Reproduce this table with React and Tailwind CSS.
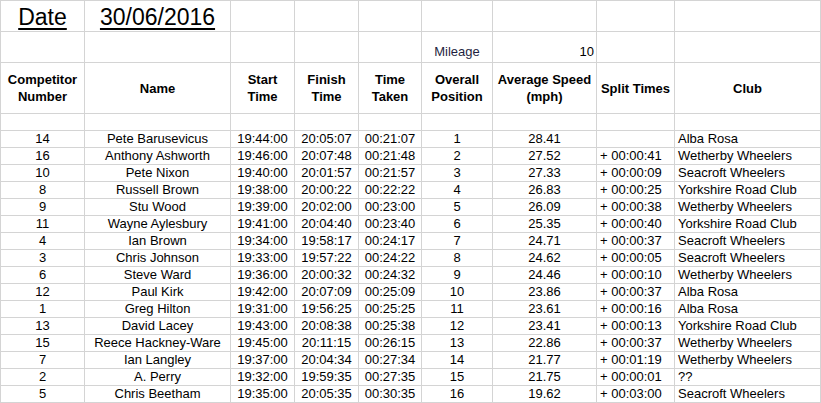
import { Fragment } from "react";

const results = [
  ["14", "Pete Barusevicus", "19:44:00", "20:05:07", "00:21:07", "1", "28.41", "", "Alba Rosa"],
  ["16", "Anthony Ashworth", "19:46:00", "20:07:48", "00:21:48", "2", "27.52", "+ 00:00:41", "Wetherby Wheelers"],
  ["10", "Pete Nixon", "19:40:00", "20:01:57", "00:21:57", "3", "27.33", "+ 00:00:09", "Seacroft Wheelers"],
  ["8", "Russell Brown", "19:38:00", "20:00:22", "00:22:22", "4", "26.83", "+ 00:00:25", "Yorkshire Road Club"],
  ["9", "Stu Wood", "19:39:00", "20:02:00", "00:23:00", "5", "26.09", "+ 00:00:38", "Wetherby Wheelers"],
  ["11", "Wayne Aylesbury", "19:41:00", "20:04:40", "00:23:40", "6", "25.35", "+ 00:00:40", "Yorkshire Road Club"],
  ["4", "Ian Brown", "19:34:00", "19:58:17", "00:24:17", "7", "24.71", "+ 00:00:37", "Seacroft Wheelers"],
  ["3", "Chris Johnson", "19:33:00", "19:57:22", "00:24:22", "8", "24.62", "+ 00:00:05", "Seacroft Wheelers"],
  ["6", "Steve Ward", "19:36:00", "20:00:32", "00:24:32", "9", "24.46", "+ 00:00:10", "Wetherby Wheelers"],
  ["12", "Paul Kirk", "19:42:00", "20:07:09", "00:25:09", "10", "23.86", "+ 00:00:37", "Alba Rosa"],
  ["1", "Greg Hilton", "19:31:00", "19:56:25", "00:25:25", "11", "23.61", "+ 00:00:16", "Alba Rosa"],
  ["13", "David Lacey", "19:43:00", "20:08:38", "00:25:38", "12", "23.41", "+ 00:00:13", "Yorkshire Road Club"],
  ["15", "Reece Hackney-Ware", "19:45:00", "20:11:15", "00:26:15", "13", "22.86", "+ 00:00:37", "Wetherby Wheelers"],
  ["7", "Ian Langley", "19:37:00", "20:04:34", "00:27:34", "14", "21.77", "+ 00:01:19", "Wetherby Wheelers"],
  ["2", "A. Perry", "19:32:00", "19:59:35", "00:27:35", "15", "21.75", "+ 00:00:01", "??"],
  ["5", "Chris Beetham", "19:35:00", "20:05:35", "00:30:35", "16", "19.62", "+ 00:03:00", "Seacroft Wheelers"],
];

const headers = [
  ["Competitor", "Number"],
  ["Name"],
  ["Start", "Time"],
  ["Finish", "Time"],
  ["Time", "Taken"],
  ["Overall", "Position"],
  ["Average Speed", "(mph)"],
  ["Split Times"],
  ["Club"],
];

const cell = "border-r border-b border-[#d4d4d4] overflow-hidden whitespace-nowrap";

const App = () => {
  return (
    <div className="w-[821px] h-[403px] bg-white text-black font-['Liberation_Sans',Arial,sans-serif] text-[13px]">
      <div className="grid grid-cols-[84px_146px_64px_64px_63px_71px_104px_78px_146px] border-l border-t border-[#d4d4d4]">
        {/* row 1 - date */}
        <div className={`${cell} h-[31px] flex items-end justify-center pb-[1px]`}>
          <span className="text-[23px] leading-[26px] underline decoration-2 underline-offset-[3px]">Date</span>
        </div>
        <div className={`${cell} h-[31px] flex items-end justify-center pb-[1px]`}>
          <span className="text-[23px] leading-[26px] underline decoration-2 underline-offset-[3px]">30/06/2016</span>
        </div>
        {[0, 1, 2, 3, 4, 5, 6].map((i) => (
          <div key={i} className={`${cell} h-[31px]`}></div>
        ))}

        {/* row 2 - mileage */}
        {[0, 1, 2, 3, 4].map((i) => (
          <div key={i} className={`${cell} h-[31px]`}></div>
        ))}
        <div className={`${cell} h-[31px] flex items-end justify-center pb-[2px] leading-[16px] text-[#1f1f3f]`}>Mileage</div>
        <div className={`${cell} h-[31px] flex items-end justify-end pb-[2px] pr-[2px] leading-[16px]`}>10</div>
        <div className={`${cell} h-[31px]`}></div>
        <div className={`${cell} h-[31px]`}></div>

        {/* row 3 - headers */}
        {headers.map((h, i) => (
          <div key={i} className={`${cell} h-[51px] flex flex-col items-center justify-center font-bold leading-[17px]`}>
            {h.map((line) => (
              <span key={line}>{line}</span>
            ))}
          </div>
        ))}

        {/* row 4 - blank */}
        {headers.map((h, i) => (
          <div key={i} className={`${cell} h-[17px]`}></div>
        ))}

        {results.map((r) => (
          <Fragment key={r[0]}>
            {r.map((v, i) => (
              <div
                key={i}
                className={`${cell} h-[17px] leading-[16px] ${i >= 7 ? "text-left pl-[3px]" : "text-center"}`}
              >
                {v}
              </div>
            ))}
          </Fragment>
        ))}
      </div>
    </div>
  );
};

export default App;
